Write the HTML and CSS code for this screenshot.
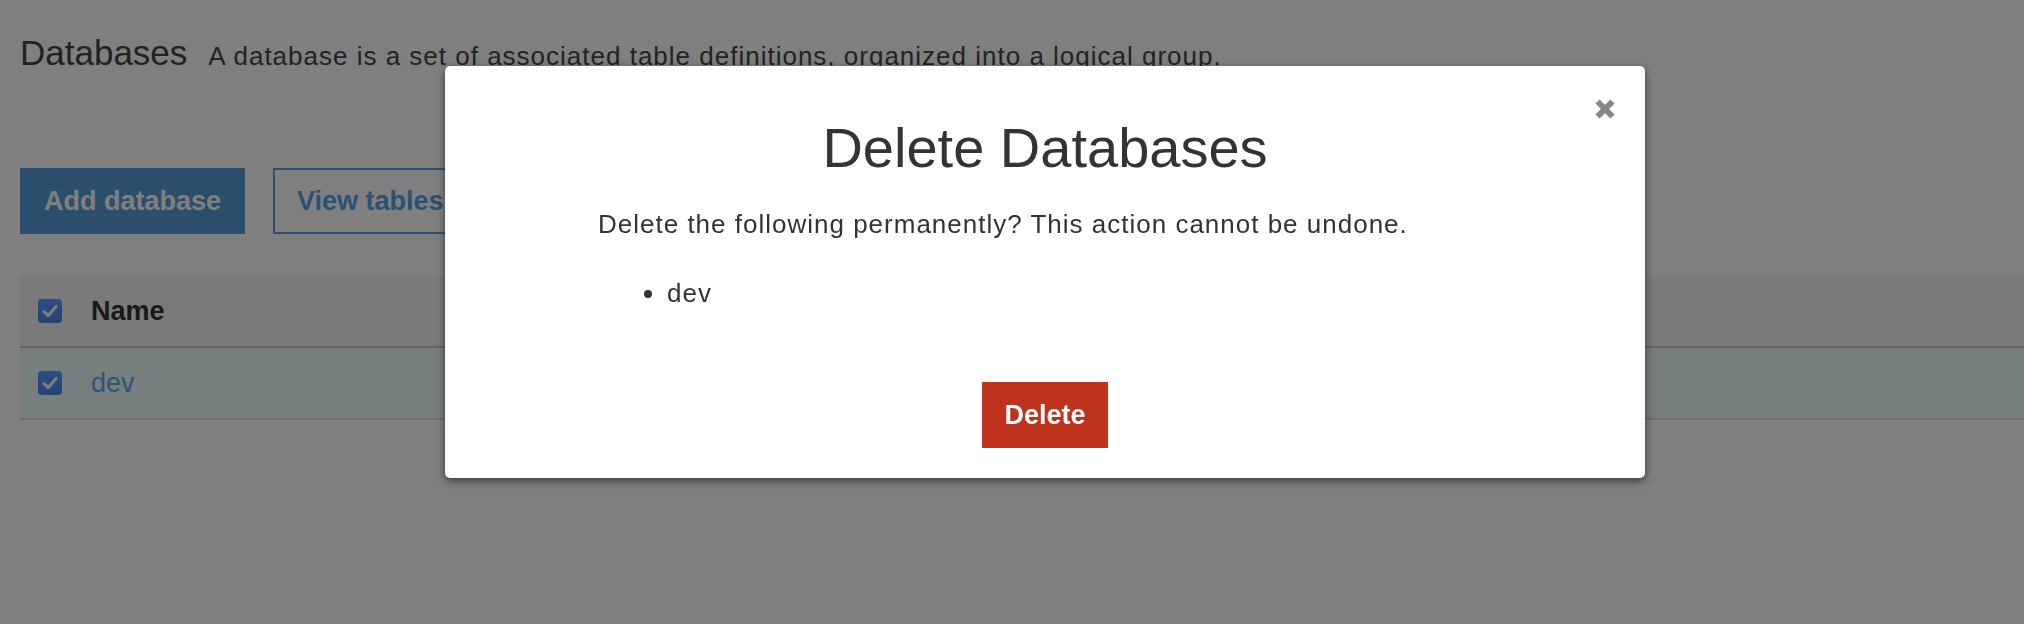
FILE: index.html
```html
<!DOCTYPE html>
<html lang="en">
<head>
<meta charset="utf-8">
<title>Databases</title>
<link rel="stylesheet" href="styles.css">
</head>
<body>
<div class="page">
  <header class="page-head">
    <h1 class="page-title">Databases</h1>
    <p class="page-desc">A database is a set of associated table definitions, organized into a logical group.</p>
  </header>
  <div class="toolbar">
    <button class="btn btn-primary" type="button">Add database</button>
    <button class="btn btn-outline" type="button">View tables</button>
  </div>
  <div class="grid">
    <div class="grid-row grid-head">
      <span class="cbx"><svg viewBox="0 0 24 24" width="24" height="24"><path d="M6 12.5l4.2 4.2L18 7.5" fill="none" stroke="#fff" stroke-width="3" stroke-linecap="round" stroke-linejoin="round"/></svg></span>
      <span class="cell-name">Name</span>
    </div>
    <div class="grid-row grid-selected">
      <span class="cbx"><svg viewBox="0 0 24 24" width="24" height="24"><path d="M6 12.5l4.2 4.2L18 7.5" fill="none" stroke="#fff" stroke-width="3" stroke-linecap="round" stroke-linejoin="round"/></svg></span>
      <a class="cell-link" href="#">dev</a>
    </div>
  </div>
</div>

<div class="backdrop"></div>

<div class="modal" role="dialog">
  <button class="modal-close" type="button" aria-label="Close">
    <svg viewBox="0 0 22 22" width="22" height="22"><path d="M3.5 3.5L18.5 18.5M18.5 3.5L3.5 18.5" stroke="#888" stroke-width="6" fill="none"/></svg>
  </button>
  <h2 class="modal-title">Delete Databases</h2>
  <div class="modal-body">
    <p class="modal-text">Delete the following permanently? This action cannot be undone.</p>
    <ul class="modal-list">
      <li>dev</li>
    </ul>
  </div>
  <div class="modal-footer">
    <button class="btn btn-danger" type="button">Delete</button>
  </div>
</div>
</body>
</html>
```

FILE: styles.css
```css
* {
  box-sizing: border-box;
}

html, body {
  margin: 0;
  padding: 0;
  background: #ffffff;
  font-family: "Liberation Sans", Arial, Helvetica, sans-serif;
  color: #333;
}

.page {
  padding: 33px 0 0 20px;
}

.page-head {
  display: flex;
  align-items: baseline;
  gap: 21px;
}

.page-title {
  margin: 0;
  font-size: 35px;
  line-height: 40px;
  font-weight: normal;
  color: #444;
}

.page-desc {
  margin: 0;
  font-size: 26px;
  letter-spacing: 1px;
  line-height: 40px;
  color: #464646;
}

.toolbar {
  display: flex;
  gap: 28px;
  margin-top: 92px;
}

.btn {
  font-family: "Liberation Sans", Arial, Helvetica, sans-serif;
  font-size: 27px;
  font-weight: bold;
  line-height: 36px;
  padding: 13px 22px;
  border: 2px solid transparent;
  border-radius: 0;
  cursor: pointer;
}

.btn-primary {
  background: #549cd8;
  border-color: #549cd8;
  color: #fff;
}

.btn-outline {
  background: #fff;
  border-color: #56a4e6;
  color: #56a4e6;
}

.grid {
  margin-top: 42px;
}

.grid-row {
  display: flex;
  align-items: center;
  height: 72px;
  padding-left: 18px;
  gap: 29px;
}

.grid-head {
  background: #f4f4f4;
  border-bottom: 2px solid #c6c6c6;
}

.grid-selected {
  background: #ecfffc;
  border-bottom: 2px solid #dcdcdc;
}

.cbx {
  display: flex;
  width: 24px;
  height: 24px;
  border-radius: 4px;
  background: linear-gradient(#5a9cff, #4884f0);
}

.cell-name {
  font-size: 27px;
  line-height: 36px;
  font-weight: bold;
  color: #333;
}

.cell-link {
  font-size: 27px;
  line-height: 36px;
  color: #56a8ec;
  text-decoration: none;
}

.backdrop {
  position: fixed;
  inset: 0;
  background: rgba(0, 0, 0, 0.5);
}

.modal {
  position: absolute;
  top: 66px;
  left: 445px;
  width: 1200px;
  padding: 50px 0 30px;
  background: #fff;
  border-radius: 5px;
  box-shadow: 0 3px 8px rgba(0, 0, 0, 0.55);
}

.modal-close {
  position: absolute;
  top: 32px;
  right: 29px;
  width: 22px;
  height: 22px;
  padding: 0;
  border: 0;
  background: none;
  display: flex;
}

.modal-title {
  margin: 0;
  text-align: center;
  font-size: 56px;
  line-height: 64px;
  font-weight: normal;
  color: #333;
}

.modal-body {
  width: 894px;
  margin: 26px auto 0;
}

.modal-text {
  margin: 0;
  font-size: 26px;
  letter-spacing: 1px;
  line-height: 36px;
  color: #333;
}

.modal-list {
  margin: 33px 0 0;
  padding-left: 69px;
  font-size: 26px;
  letter-spacing: 1px;
  line-height: 36px;
  color: #333;
}

.modal-footer {
  display: flex;
  justify-content: center;
  margin-top: 71px;
}

.btn-danger {
  background: #be321e;
  border-color: #be321e;
  color: #fff;
  padding: 13px 20px;
}
```
